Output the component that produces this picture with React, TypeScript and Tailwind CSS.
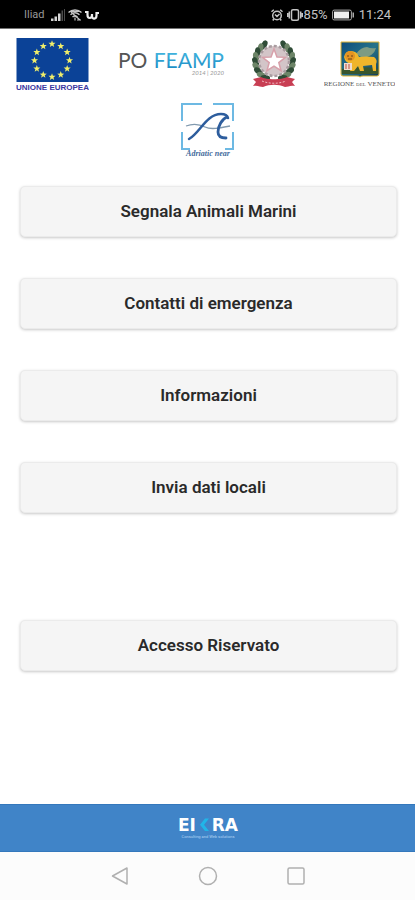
import React from "react";

const mainActions = [
  "Segnala Animali Marini",
  "Contatti di emergenza",
  "Informazioni",
  "Invia dati locali",
];

function starPoints(cx: number, cy: number, r: number) {
  return Array.from({ length: 10 }, (_, i) => {
    const radius = i % 2 === 0 ? r : r * 0.42;
    const angle = (Math.PI / 5) * i - Math.PI / 2;
    return `${(cx + radius * Math.cos(angle)).toFixed(2)},${(cy + radius * Math.sin(angle)).toFixed(2)}`;
  }).join(" ");
}

function StatusBar() {
  return (
    <header className="flex h-[29px] items-center justify-between border-b border-neutral-500 bg-black px-6 pt-0.5 text-[#c4c4c4]">
      <div className="flex items-center gap-0.5">
        <span className="w-6 text-[11px] leading-4 text-[#9a9a9a]">Iliad</span>
        <svg className="h-3 w-4" viewBox="0 0 16 12" aria-hidden="true">
          <path d="M1 12V9.500h2.500V12zM4.500 12V7.500h2.500V12zM8 12V4.500h2.500V12z" fill="#d5d5d5" />
          <path d="M11.500 12V1.500h1.500V12zM14 12V0h1V12z" fill="#4b4b4b" />
        </svg>
        <svg className="h-3 w-3.5" viewBox="0 0 14 12" fill="none" stroke="#c4c4c4" aria-hidden="true">
          <path d="M.5 3.500C4 .2 10 .2 13.500 3.500M2.500 5.700c3-2.500 6-2.500 9 0M4.500 8c1.700-1.400 3.300-1.400 5 0" strokeWidth="1.400" />
          <path d="M1 2.500h12M3 3l9 8M7 8.500v3M9 11h4" strokeWidth="1.200" />
        </svg>
        <svg className="h-3 w-4" viewBox="0 0 16 12" fill="none" stroke="#ededed" strokeWidth="2.200" aria-hidden="true">
          <path d="M1 3h2.500v3c0 4 4.500 4 4.500 0V5v2c0 3.500 4.500 3.500 4.500-.5V4h2.500" />
        </svg>
      </div>
      <div className="flex items-center gap-1">
        <svg className="h-3 w-3" viewBox="0 0 12 12" fill="none" stroke="currentColor" strokeWidth="1.500" aria-hidden="true">
          <circle cx="6" cy="6.500" r="4.300" />
          <path d="M.5 2.700l2.300-2M11.500 2.700l-2.300-2M4 5.500l2 2 2.500-2.500M2.800 10l-1 1.500M9.200 10l1 1.500" />
        </svg>
        <div className="flex items-center">
          <svg className="h-3 w-4" viewBox="0 0 16 12" fill="none" stroke="currentColor" strokeWidth="1.500" aria-hidden="true">
            <rect x="4.500" y=".8" width="7" height="10.400" rx="1.500" />
            <path d="M2.300 2.500v7M.7 4v4M13.700 2.500v7M15.300 4v4" />
          </svg>
          <span className="text-[13px] leading-4">85%</span>
        </div>
        <svg className="h-3 w-[23px]" viewBox="0 0 23 12" aria-hidden="true">
          <rect x=".6" y="1.100" width="18.800" height="9.800" rx="1.500" fill="none" stroke="#aaa" />
          <rect x="2" y="2.500" width="15" height="7" fill="#efefef" />
          <path d="M20.500 3.500h1.500v5h-1.500z" fill="#aaa" />
        </svg>
        <span className="text-[13px] leading-4">11:24</span>
      </div>
    </header>
  );
}

function EuropeLogo() {
  return (
    <svg className="h-14 w-[73px]" viewBox="0 0 73 56" role="img" aria-label="Unione Europea">
      <rect x=".5" y="1" width="72" height="44" fill="#0b4297" />
      {Array.from({ length: 12 }, (_, i) => {
        const angle = (Math.PI / 6) * i;
        return (
          <polygon
            key={i}
            points={starPoints(36 + 17.500 * Math.sin(angle), 23.500 - 16.500 * Math.cos(angle), 3.700)}
            fill="#f1ee6a"
          />
        );
      })}
      <text x="36.500" y="53" textAnchor="middle" fontFamily="Liberation Sans, sans-serif" fontSize="8" fontWeight="700" fill="#3a38a0">
        UNIONE EUROPEA
      </text>
    </svg>
  );
}

function FeampLogo() {
  return (
    <svg className="h-14 w-[110px]" viewBox="0 0 110 56" role="img" aria-label="PO FEAMP 2014 2020">
      <defs>
        <linearGradient id="feamp" x1="0" y1="0" x2="0" y2="1">
          <stop offset="0.200" stopColor="#41b4de" />
          <stop offset="1" stopColor="#1685c0" />
        </linearGradient>
      </defs>
      <text x="3" y="31" fontFamily="Lato, sans-serif" fontSize="21" fill="#555555">PO</text>
      <text x="109" y="31" textAnchor="end" fontFamily="Lato, sans-serif" fontSize="21" fill="url(#feamp)">FEAMP</text>
      <text x="109" y="38" textAnchor="end" fontFamily="Lato, sans-serif" fontSize="6" fontStyle="italic" fill="#999999">2014 | 2020</text>
    </svg>
  );
}

function RepublicLogo() {
  return (
    <svg className="h-14 w-12" viewBox="0 0 48 56" role="img" aria-label="Repubblica Italiana">
      {Array.from({ length: 9 }, (_, i) => {
        const angle = (-58 + i * 15) * (Math.PI / 180);
        const y = 24 + 19 * Math.sin(angle);
        const dx = 18.500 * Math.cos(angle);
        const turn = -38 + i * 14;
        return (
          <g key={i} fill={i % 2 ? "#6d8568" : "#2f4c37"}>
            <ellipse cx={24 - dx} cy={y} rx="2.800" ry="4.800" transform={`rotate(${-turn - 10} ${24 - dx} ${y})`} />
            <ellipse cx={24 + dx} cy={y} rx="2.800" ry="4.800" transform={`rotate(${turn + 10} ${24 + dx} ${y})`} />
          </g>
        );
      })}
      <circle cx="24" cy="24" r="15" fill="#d3c5c8" />
      <circle cx="24" cy="24" r="15" fill="none" stroke="#a99ca0" strokeWidth="2.500" strokeDasharray="3 2" />
      <polygon points={starPoints(24, 24, 12)} fill="#ffffff" stroke="#d7a0aa" strokeWidth="1.500" />
      <path d="M3 42l8-2c5 3 21 3 26 0l8 2-3 3 3 4c-5-1-7 1-10 1-7-3-15-3-22 0-3 0-5-2-10-1l3-4z" fill="#c83e53" />
      <path d="M12 44c7 3 17 3 24 0" fill="none" stroke="#f0b8c0" strokeDasharray="2 1.500" />
    </svg>
  );
}

function VenetoLogo() {
  return (
    <svg className="h-14 w-[71px]" viewBox="0 0 71 56" role="img" aria-label="Regione del Veneto">
      <defs>
        <linearGradient id="sea" x1="0" y1="0" x2="1" y2="1">
          <stop offset="0" stopColor="#0d4b7c" />
          <stop offset="0.500" stopColor="#26738a" />
          <stop offset="1" stopColor="#123b58" />
        </linearGradient>
      </defs>
      <path d="M17 5h38v32q0 2-2 2h-14q-2 0-3 1-1-1-3-1H19q-2 0-2-2z" fill="url(#sea)" stroke="#e5b735" />
      <path d="M18 32q18-4 36 0v5H18z" fill="#39562d" />
      <path d="M32 17q5-7 11-7 4 2 9 1-2 8-13 10z" fill="#7d9b83" />
      <path d="M20 20q1-6 7-6 6 0 8 6 7-1 15 0 4 3 2 7v7h-3l-1-6-9 1 1 5h-4l-2-5-4 5h-4l2-7q-7-1-8-7z" fill="#efb52b" />
      <circle cx="26" cy="19" r="5" fill="#e59322" />
      <path d="M23 19h2m2 0h2m-5 3h4" stroke="#68451b" />
      <path d="M20 26h8v7h-8z" fill="#eeddd0" />
      <path d="M22 27v5m3-5v5" stroke="#bd4d3c" />
      <text x="35.500" y="49" textAnchor="middle" fontFamily="Liberation Serif, serif" fontSize="7" fill="#555555">
        REGIONE <tspan fontSize="5">DEL</tspan> VENETO
      </text>
    </svg>
  );
}

function AdriaticLogo() {
  return (
    <svg className="h-14 w-14" viewBox="0 0 56 56" role="img" aria-label="Adriatic near">
      <path d="M2 19V2h20M33 2h20v17M2 30v17h8M45 47h8V30" fill="none" stroke="#6db9e3" strokeWidth="2" />
      <path d="M6 24c8-3 13-2 19 1s15 1 25-1" fill="none" stroke="#8199ae" strokeWidth="1.300" />
      <path d="M9 37C20 31 26 12 41 12q6 0 7 4" fill="none" stroke="#2d5d9d" strokeWidth="2.500" strokeLinecap="round" />
      <path d="M47 15c-5 2-9 9-9 15 0 4 3 6 8 6" fill="none" stroke="#2d5d9d" strokeWidth="2.800" strokeLinecap="round" />
      <text x="28" y="54" textAnchor="middle" fontFamily="Liberation Serif, serif" fontSize="8" fontStyle="italic" fontWeight="700" fill="#456b9c">
        Adriatic near
      </text>
    </svg>
  );
}

function MenuButton({ label }: { label: string }) {
  return (
    <button
      type="button"
      className="h-[51px] w-full rounded-[5px] border border-[#ebebeb] bg-[#f5f5f5] pb-0.5 text-[17px] leading-6 font-semibold text-[#2a2a2a] shadow-[0_1px_3px_rgba(0,0,0,0.22)]"
    >
      {label}
    </button>
  );
}

function CompanyFooter() {
  return (
    <footer className="flex h-12 items-center justify-center border-y border-[#3478bc] bg-[#4084c8]">
      <svg className="h-6 w-16" viewBox="0 0 64 24" role="img" aria-label="EIKRA">
        <text x="2" y="15" fontFamily="DejaVu Sans, sans-serif" fontSize="17" fontWeight="700" fill="#ffffff">EI</text>
        <path d="M29 2.500h4l-5 6.200 5 6.300h-4l-5-6.300z" fill="#21b5e8" />
        <text x="62" y="15" textAnchor="end" fontFamily="DejaVu Sans, sans-serif" fontSize="17" fontWeight="700" fill="#ffffff">RA</text>
        <text x="32" y="22" textAnchor="middle" fontFamily="Roboto, sans-serif" fontSize="4" fill="#b4d5f3">Consulting and Web solutions</text>
      </svg>
    </footer>
  );
}

function SystemNav() {
  const button = "flex size-6 items-center justify-center";
  return (
    <nav aria-label="Sistema" className="flex h-12 items-center justify-center gap-16 bg-[#fcfcfc] text-[#b0b0b0]">
      <button type="button" aria-label="Indietro" className={button}>
        <svg className="size-5" viewBox="0 0 20 20" fill="none" stroke="currentColor" strokeWidth="1.500" strokeLinejoin="round" aria-hidden="true">
          <path d="M17 2v16L2.500 10z" />
        </svg>
      </button>
      <button type="button" aria-label="Home" className={button}>
        <svg className="size-5" viewBox="0 0 20 20" fill="none" stroke="currentColor" strokeWidth="1.500" aria-hidden="true">
          <circle cx="10" cy="10" r="8.500" />
        </svg>
      </button>
      <button type="button" aria-label="Recenti" className={button}>
        <svg className="size-5" viewBox="0 0 20 20" fill="none" stroke="currentColor" strokeWidth="1.500" aria-hidden="true">
          <rect x="2" y="2" width="16" height="16" rx="1.500" />
        </svg>
      </button>
    </nav>
  );
}

export default function App() {
  return (
    <div className="flex min-h-screen flex-col bg-white font-['Roboto',sans-serif]">
      <StatusBar />
      <main className="flex-1">
        <div className="flex items-start justify-between pt-2 pr-5 pl-4">
          <EuropeLogo />
          <FeampLogo />
          <RepublicLogo />
          <VenetoLogo />
        </div>
        <div className="flex justify-center pt-[9px]">
          <AdriaticLogo />
        </div>
        <div className="flex flex-col gap-[41px] pt-7 pr-[18px] pl-5">
          {mainActions.map((label) => (
            <MenuButton key={label} label={label} />
          ))}
        </div>
        <div className="mt-[107px] pr-[18px] pl-5">
          <MenuButton label="Accesso Riservato" />
        </div>
      </main>
      <CompanyFooter />
      <SystemNav />
    </div>
  );
}
